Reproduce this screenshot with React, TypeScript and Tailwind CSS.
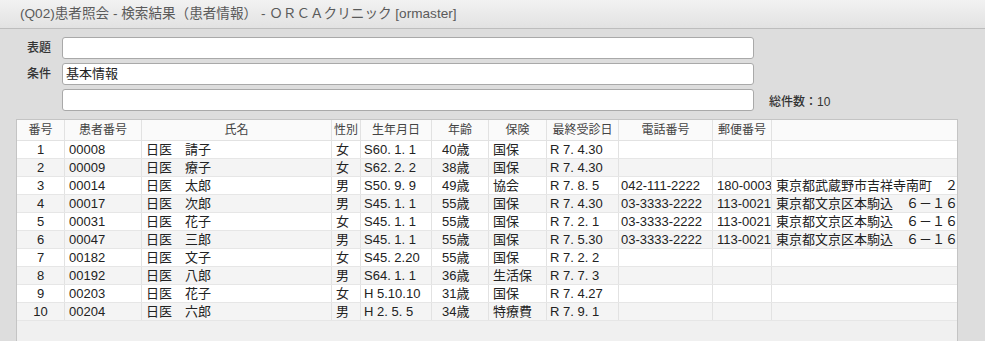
const font = "font-['Liberation_Sans','Noto_Sans_CJK_JP',sans-serif]";

type Row = {
  no: string;
  pid: string;
  name: string;
  sex: string;
  birth: string;
  age: string;
  ins: string;
  last: string;
  tel: string;
  zip: string;
  addr: string;
};

const rows: Row[] = [
  { no: '1', pid: '00008', name: '日医　請子', sex: '女', birth: 'S60. 1. 1', age: '40歳', ins: '国保', last: 'R 7. 4.30', tel: '', zip: '', addr: '' },
  { no: '2', pid: '00009', name: '日医　療子', sex: '女', birth: 'S62. 2. 2', age: '38歳', ins: '国保', last: 'R 7. 4.30', tel: '', zip: '', addr: '' },
  { no: '3', pid: '00014', name: '日医　太郎', sex: '男', birth: 'S50. 9. 9', age: '49歳', ins: '協会', last: 'R 7. 8. 5', tel: '042-111-2222', zip: '180-0003', addr: '東京都武蔵野市吉祥寺南町　２－３－４' },
  { no: '4', pid: '00017', name: '日医　次郎', sex: '男', birth: 'S45. 1. 1', age: '55歳', ins: '国保', last: 'R 7. 4.30', tel: '03-3333-2222', zip: '113-0021', addr: '東京都文京区本駒込　６－１６－３' },
  { no: '5', pid: '00031', name: '日医　花子', sex: '女', birth: 'S45. 1. 1', age: '55歳', ins: '国保', last: 'R 7. 2. 1', tel: '03-3333-2222', zip: '113-0021', addr: '東京都文京区本駒込　６－１６－３' },
  { no: '6', pid: '00047', name: '日医　三郎', sex: '男', birth: 'S45. 1. 1', age: '55歳', ins: '国保', last: 'R 7. 5.30', tel: '03-3333-2222', zip: '113-0021', addr: '東京都文京区本駒込　６－１６－３' },
  { no: '7', pid: '00182', name: '日医　文子', sex: '女', birth: 'S45. 2.20', age: '55歳', ins: '国保', last: 'R 7. 2. 2', tel: '', zip: '', addr: '' },
  { no: '8', pid: '00192', name: '日医　八郎', sex: '男', birth: 'S64. 1. 1', age: '36歳', ins: '生活保', last: 'R 7. 7. 3', tel: '', zip: '', addr: '' },
  { no: '9', pid: '00203', name: '日医　花子', sex: '女', birth: 'H 5.10.10', age: '31歳', ins: '国保', last: 'R 7. 4.27', tel: '', zip: '', addr: '' },
  { no: '10', pid: '00204', name: '日医　六郎', sex: '男', birth: 'H 2. 5. 5', age: '34歳', ins: '特療費', last: 'R 7. 9. 1', tel: '', zip: '', addr: '' },
];

const cols = 'grid grid-cols-[48px_77px_190px_29px_71px_57px_58px_72px_94px_59px_1fr]';
const cell = 'border-r border-[#e2e2e2] whitespace-nowrap overflow-hidden';

function Field({ label, value }: { label?: string; value?: string }) {
  return (
    <div className="flex items-center h-[22px]">
      <div className="w-[62px] pl-[27px] text-[12px] font-medium text-[#333]">{label}</div>
      <div className="w-[692px] h-[22px] bg-white border border-[#a9a9a9] rounded-[3px] px-[3px] flex items-center text-[13px] text-[#222]">
        {value}
      </div>
    </div>
  );
}

export default function App() {
  const headers = ['番号', '患者番号', '氏名', '性別', '生年月日', '年齢', '保険', '最終受診日', '電話番号', '郵便番号', ''];
  return (
    <div className={`${font} w-[985px] h-[341px] bg-[#dddddd] overflow-hidden flex flex-col`}>
      {/* title bar */}
      <div className="h-[29px] shrink-0 bg-gradient-to-b from-[#f2f2f2] to-[#e2e2e2] border-b border-[#bdbdbd] flex items-center pl-[20px] text-[13.6px] text-[#5a5a5a]">
        (Q02)患者照会 - 検索結果（患者情報） - ＯＲＣＡクリニック [ormaster]
      </div>

      {/* search fields */}
      <div className="flex flex-col gap-[4px] pt-[8px]">
        <Field label="表題" />
        <Field label="条件" value="基本情報" />
        <div className="flex items-center">
          <Field />
          <div className="ml-[15px] mt-[4px] text-[12px] font-medium text-[#333]">総件数：10</div>
        </div>
      </div>

      {/* result table */}
      <div className="mt-[8px] ml-[16px] w-[942px] flex-1 bg-[#f0f0f0] border-t border-l border-r border-[#c4c4c4] text-[13px] text-[#222]">
        <div className={`${cols} h-[21px] bg-[#fafafa] border-b border-[#e2e2e2] text-[12px] text-[#444]`}>
          {headers.map((h, i) => (
            <div key={i} className={`${cell} flex items-center justify-center ${i === 10 ? 'border-r-0' : ''}`}>{h}</div>
          ))}
        </div>
        {rows.map((r, i) => (
          <div key={r.no} className={`${cols} h-[18px] border-b border-[#e6e6e6] ${i % 2 === 0 ? 'bg-white' : 'bg-[#f4f4f4]'}`}>
            <div className={`${cell} flex items-center justify-center`}>{r.no}</div>
            <div className={`${cell} flex items-center pl-[4px]`}>{r.pid}</div>
            <div className={`${cell} flex items-center pl-[4px]`}>{r.name}</div>
            <div className={`${cell} flex items-center pl-[4px]`}>{r.sex}</div>
            <div className={`${cell} flex items-center pl-[3px]`}>{r.birth}</div>
            <div className={`${cell} flex items-center pl-[10px]`}>{r.age}</div>
            <div className={`${cell} flex items-center pl-[4px]`}>{r.ins}</div>
            <div className={`${cell} flex items-center pl-[3px]`}>{r.last}</div>
            <div className={`${cell} flex items-center pl-[2px]`}>{r.tel}</div>
            <div className={`${cell} flex items-center pl-[4px]`}>{r.zip}</div>
            <div className={`${cell} border-r-0 flex items-center pl-[4px]`}>{r.addr}</div>
          </div>
        ))}
      </div>
    </div>
  );
}
